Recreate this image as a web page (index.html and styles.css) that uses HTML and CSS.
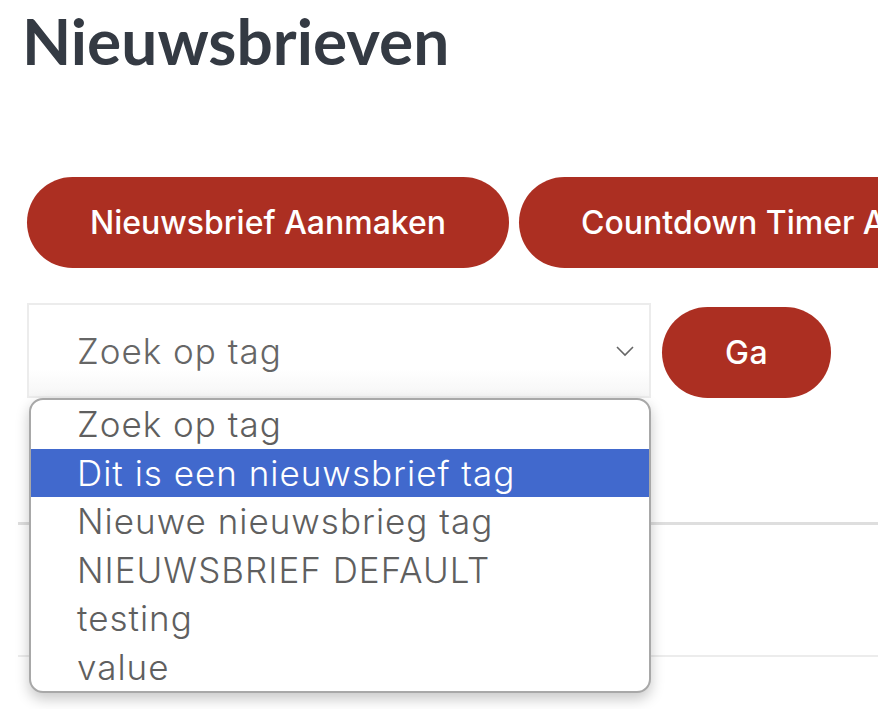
FILE: index.html
```html
<!DOCTYPE html>
<html lang="nl">
<head>
<meta charset="utf-8">
<title>Nieuwsbrieven</title>
<link rel="stylesheet" href="styles.css">
</head>
<body>
<div class="page">
  <h1 class="title">Nieuwsbrieven</h1>
  <div class="actions">
    <button class="pill pill-wide">Nieuwsbrief Aanmaken</button>
    <button class="pill pill-wide">Countdown Timer Aanmaken</button>
  </div>
  <div class="search">
    <div class="select">
      <span class="select-value">Zoek op tag</span>
      <svg class="chevron" width="20" height="12" viewBox="0 0 20 12"><path d="M2 2 L10 10 L18 2" fill="none" stroke="#666" stroke-width="1.6"/></svg>
    </div>
    <button class="pill pill-go">Ga</button>
  </div>
  <div class="rule rule-thick"></div>
  <div class="rule rule-thin"></div>
</div>
<div class="dropdown">
  <div class="option">Zoek op tag</div>
  <div class="option option-active">Dit is een nieuwsbrief tag</div>
  <div class="option">Nieuwe nieuwsbrieg tag</div>
  <div class="option">NIEUWSBRIEF DEFAULT</div>
  <div class="option">testing</div>
  <div class="option">value</div>
</div>
</body>
</html>
```
FILE: styles.css
```css
html, body {
  margin: 0;
  padding: 0;
  background: #ffffff;
  overflow: hidden;
  width: 878px;
  height: 709px;
}
body {
  font-family: Inter, "Noto Sans", sans-serif;
  position: relative;
}
.page {
  padding: 0 0 0 18px;
}
.title {
  margin: 0;
  padding: 3px 0 0 4px;
  font-family: Lato, "Noto Sans", sans-serif;
  font-size: 64px;
  line-height: 76px;
  font-weight: 700;
  color: #343a43;
}
.actions {
  display: flex;
  gap: 10px;
  margin-top: 98px;
  padding-left: 9px;
  white-space: nowrap;
}
.pill {
  border: none;
  background: #ac2f22;
  color: #ffffff;
  font-family: inherit;
  font-size: 32px;
  font-weight: 500;
  border-radius: 46px;
  height: 91px;
  flex: none;
  padding: 0;
}
.pill-wide {
  box-sizing: border-box;
  padding: 0 62px;
  min-width: 482px;
}
.search {
  display: flex;
  align-items: flex-start;
  gap: 11px;
  margin-top: 35px;
  padding-left: 9px;
}
.select {
  box-sizing: border-box;
  width: 624px;
  height: 95px;
  border: 2px solid #ececec;
  display: flex;
  align-items: center;
  justify-content: space-between;
  padding: 0 14px 0 48px;
  background: linear-gradient(#ffffff 70%, #f6f6f6);
}
.select-value {
  font-size: 35px;
  font-weight: 300;
  letter-spacing: 1px;
  color: #666666;
}
.pill-go {
  width: 169px;
  margin-top: 4px;
  letter-spacing: 0.5px;
}
.rule {
  margin-right: -20px;
}
.rule-thick {
  margin-top: 124px;
  height: 3px;
  background: #dedede;
}
.rule-thin {
  margin-top: 130px;
  height: 2px;
  background: #ececec;
}
.dropdown {
  position: absolute;
  left: 29px;
  top: 398px;
  width: 622px;
  box-sizing: border-box;
  border: 2px solid #a8a8a8;
  border-radius: 14px;
  background: #ffffff;
  overflow: hidden;
  box-shadow: 0 6px 14px rgba(0, 0, 0, 0.22);
}
.option {
  height: 48.5px;
  line-height: 48px;
  padding-left: 46px;
  font-size: 35px;
  font-weight: 300;
  letter-spacing: 1px;
  color: #5f5f5f;
  white-space: nowrap;
}
.option-active {
  background: #4169cd;
  color: #ffffff;
}
```
